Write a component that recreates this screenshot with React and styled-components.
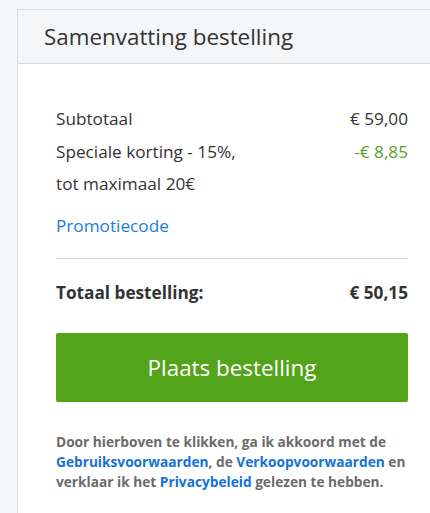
import React from "react";
import styled, { createGlobalStyle } from "styled-components";

const GlobalStyle = createGlobalStyle`
  html, body {
    margin: 0;
    padding: 0;
    background: #f5f6f8;
    overflow: hidden;
    font-family: "Open Sans", "Liberation Sans", sans-serif;
  }
`;

const Page = styled.div`
  padding: 9px 0 0 17px;
  width: 430px;
`;

const Card = styled.section`
  width: 428px;
  border: 1px solid #dcdde1;
  border-right: none;
  background: #fff;
`;

const Header = styled.header`
  background: #f5f6f8;
  border-bottom: 1px solid #d8d9dd;
  height: 53px;
  padding-left: 26px;
  display: flex;
  align-items: center;
`;

const Title = styled.h2`
  margin: 0;
  font-size: 22.4px;
  font-weight: 400;
  color: #333;
`;

const Body = styled.div`
  padding: 39px 38px 30px 38px;
  width: 352px;
`;

const Row = styled.div`
  display: flex;
  justify-content: space-between;
  align-items: flex-start;
  font-size: 17.2px;
  line-height: 32.5px;
  color: #333;
  font-weight: ${(p) => (p.bold ? 700 : 400)};
`;

const Label = styled.span`
  max-width: 200px;
`;

const Amount = styled.span`
  color: ${(p) => (p.discount ? "#5aa12c" : "#333")};
`;

const PromoLink = styled.a`
  display: block;
  margin-top: 9px;
  font-size: 17.2px;
  line-height: 32px;
  color: #1a7ce0;
  text-decoration: none;
`;

const Divider = styled.hr`
  border: none;
  border-top: 1px solid #dadbdf;
  margin: 16px 0 18px;
`;

const OrderButton = styled.button`
  display: block;
  width: 100%;
  height: 69px;
  margin-top: 24px;
  border: none;
  border-radius: 2px;
  background: #54a41b;
  color: #fff;
  font-family: "Open Sans", "Liberation Sans", sans-serif;
  font-size: 22.4px;
  font-weight: 400;
  cursor: pointer;
`;

const Terms = styled.p`
  margin: 30px 0 0;
  font-size: 13.7px;
  line-height: 20px;
  font-weight: 700;
  color: #6b6b6b;
`;

const TermsLink = styled.a`
  color: #1570d8;
  text-decoration: none;
`;

export default function App() {
  return (
    <>
      <GlobalStyle />
      <Page>
        <Card>
          <Header>
            <Title>Samenvatting bestelling</Title>
          </Header>
          <Body>
            <Row>
              <Label>Subtotaal</Label>
              <Amount>€ 59,00</Amount>
            </Row>
            <Row>
              <Label>Speciale korting - 15%, tot maximaal 20€</Label>
              <Amount discount>-€ 8,85</Amount>
            </Row>
            <PromoLink href="#">Promotiecode</PromoLink>
            <Divider />
            <Row bold>
              <Label>Totaal bestelling:</Label>
              <Amount>€ 50,15</Amount>
            </Row>
            <OrderButton>Plaats bestelling</OrderButton>
            <Terms>
              Door hierboven te klikken, ga ik akkoord met de{" "}
              <TermsLink href="#">Gebruiksvoorwaarden</TermsLink>, de{" "}
              <TermsLink href="#">Verkoopvoorwaarden</TermsLink> en verklaar ik
              het <TermsLink href="#">Privacybeleid</TermsLink> gelezen te
              hebben.
            </Terms>
          </Body>
        </Card>
      </Page>
    </>
  );
}
